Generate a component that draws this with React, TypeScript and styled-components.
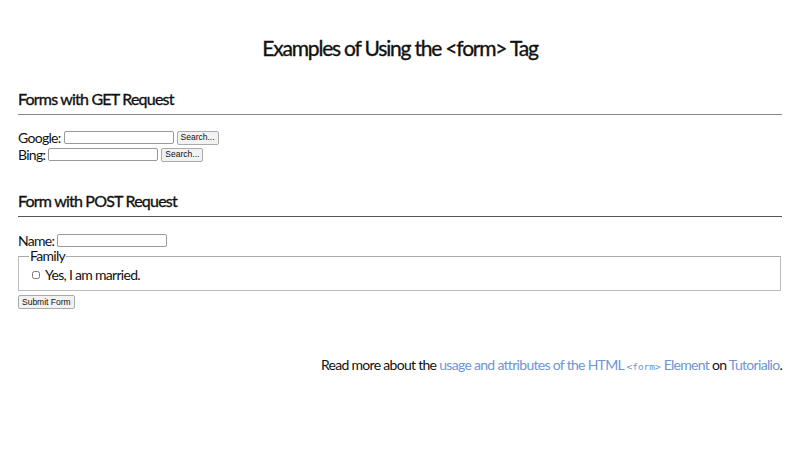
import styled, { createGlobalStyle } from "styled-components";

const GlobalStyle = createGlobalStyle`
  html, body {
    margin: 0;
    padding: 0;
    background: #ffffff;
  }
  body {
    font-family: Lato, "Liberation Sans", sans-serif;
    color: #111;
    letter-spacing: -0.7px;
  }
`;

const Page = styled.div`
  padding: 0 18px;
  width: 800px;
  box-sizing: border-box;
`;

const Title = styled.h1`
  margin: 0;
  padding-top: 36px;
  text-align: center;
  font-size: 21px;
  font-weight: 400;
  line-height: 24px;
  letter-spacing: -1.2px;
  -webkit-text-stroke: 0.35px #111;
`;

const SectionTitle = styled.h2<{ $top: number }>`
  margin: ${(p) => p.$top}px 0 0;
  font-size: 16px;
  font-weight: 400;
  line-height: 20px;
  letter-spacing: -0.8px;
  -webkit-text-stroke: 0.35px #111;
`;

const Rule = styled.hr<{ $dark?: boolean }>`
  margin: 5px 0 0;
  border: 0;
  height: 1px;
  background: ${(p) => (p.$dark ? "#555" : "#888")};
`;

const Form = styled.form<{ $top: number }>`
  margin-top: ${(p) => p.$top}px;
  font-size: 14px;
  line-height: 17px;
`;

const Row = styled.div`
  display: flex;
  align-items: center;
  height: 17px;
`;

const Label = styled.label`
  margin-right: 3px;
`;

const TextInput = styled.input`
  width: 110px;
  height: 13px;
  box-sizing: border-box;
  border: 1px solid #999;
  border-radius: 2px;
  padding: 0 2px;
  margin: 0 3px 0 0;
  font-size: 10px;
`;

const SmallButton = styled.button`
  font-family: "Liberation Sans", Arial, sans-serif;
  font-size: 8.5px;
  letter-spacing: 0;
  line-height: 11px;
  height: 14px;
  padding: 0 3px;
  border: 1px solid #aaa;
  border-radius: 2px;
  background: #f2f2f2;
  color: #111;
`;

const Fieldset = styled.fieldset`
  margin: 0 1px 0 0;
  padding: 3px 12px 7px;
  border: 1px solid #bbb;
  border-top-color: #aaa;
`;

const Legend = styled.legend`
  padding: 0 1px;
  margin-left: -2px;
  font-size: 14px;
  line-height: 14px;
`;

const CheckRow = styled.label`
  display: flex;
  align-items: center;
  gap: 5px;
`;

const CheckBox = styled.input`
  width: 8px;
  height: 8px;
  margin: 0 0 0 1px;
`;

const SubmitRow = styled.div`
  display: flex;
  margin-top: 4px;
`;

const Footer = styled.p`
  margin: 47px 0 0;
  text-align: right;
  font-size: 14px;
  line-height: 17px;
`;

const Link = styled.a`
  color: #6f95d2;
  text-decoration: none;
`;

const Code = styled.code`
  font-family: "DejaVu Sans Mono", "Liberation Mono", monospace;
  font-size: 9.5px;
  letter-spacing: 0;
`;

export default function App() {
  return (
    <>
      <GlobalStyle />
      <Page>
        <Title>Examples of Using the &lt;form&gt; Tag</Title>

        <SectionTitle $top={29}>Forms with GET Request</SectionTitle>
        <Rule />
        <Form $top={14}>
          <Row>
            <Label>Google:</Label>
            <TextInput type="text" />
            <SmallButton type="button">Search...</SmallButton>
          </Row>
          <Row>
            <Label>Bing:</Label>
            <TextInput type="text" />
            <SmallButton type="button">Search...</SmallButton>
          </Row>
        </Form>

        <SectionTitle $top={28}>Form with POST Request</SectionTitle>
        <Rule $dark />
        <Form $top={15}>
          <Row>
            <Label>Name:</Label>
            <TextInput type="text" />
          </Row>
          <Fieldset>
            <Legend>Family</Legend>
            <CheckRow>
              <CheckBox type="checkbox" />
              Yes, I am married.
            </CheckRow>
          </Fieldset>
          <SubmitRow>
            <SmallButton type="button">Submit Form</SmallButton>
          </SubmitRow>
        </Form>

        <Footer>
          Read more about the{" "}
          <Link href="#">
            usage and attributes of the HTML <Code>&lt;form&gt;</Code> Element
          </Link>{" "}
          on <Link href="#">Tutorialio</Link>.
        </Footer>
      </Page>
    </>
  );
}
